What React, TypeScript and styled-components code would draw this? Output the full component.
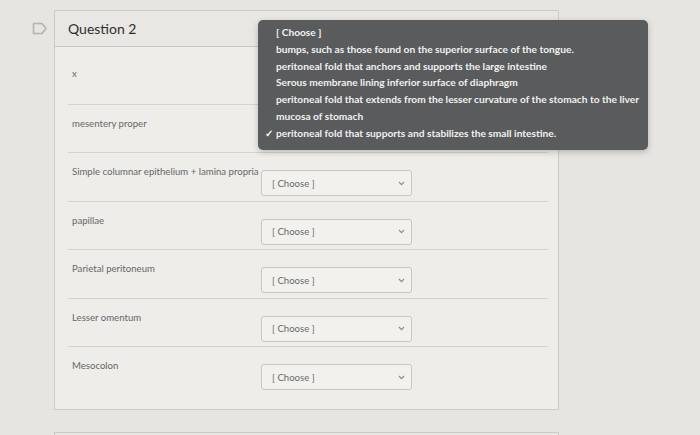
import styled, { createGlobalStyle } from "styled-components";

const GlobalStyle = createGlobalStyle`
  html, body {
    margin: 0;
    padding: 0;
    background: #e7e5e1;
  }
  body {
    font-family: "Lato", "Liberation Sans", sans-serif;
    width: 700px;
    height: 435px;
    overflow: hidden;
  }
`;

const rows = [
  "x",
  "mesentery proper",
  "Simple columnar epithelium + lamina propria",
  "papillae",
  "Parietal peritoneum",
  "Lesser omentum",
  "Mesocolon",
];

const options = [
  "[ Choose ]",
  "bumps, such as those found on the superior surface of the tongue.",
  "peritoneal fold that anchors and supports the large intestine",
  "Serous membrane lining inferior surface of diaphragm",
  "peritoneal fold that extends from the lesser curvature of the stomach to the liver",
  "mucosa of stomach",
  "peritoneal fold that supports and stabilizes the small intestine.",
];

const Page = styled.div`
  position: relative;
  display: flex;
  height: 435px;
  padding: 10px 0 0 32px;
  box-sizing: border-box;
  overflow: hidden;
`;

const FlagColumn = styled.div`
  width: 22px;
  padding-top: 9px;
`;

const Cards = styled.div`
  display: flex;
  flex-direction: column;
  gap: 22px;
  width: 505px;
`;

const Card = styled.div`
  background: #eeede9;
  border: 1px solid #cdcbc7;
  flex-shrink: 0;
`;

const Header = styled.div`
  display: flex;
  align-items: center;
  height: 35px;
  padding-left: 13px;
  background: #e9e7e3;
  border-bottom: 1px solid #c9c7c3;
  color: #2e2e2e;
  font-size: 14px;
`;

const Body = styled.div`
  padding: 8px 10px 14px 13px;
`;

const Row = styled.div<{ $first?: boolean }>`
  display: flex;
  align-items: flex-start;
  height: 48.5px;
  box-sizing: border-box;
  padding-left: 4px;
  border-top: ${(p) => (p.$first ? "none" : "1px solid #d5d3cf")};
`;

const Label = styled.div`
  width: 189px;
  margin-top: 12px;
  line-height: 14px;
  font-size: 9.6px;
  color: #676767;
  white-space: nowrap;
`;

const Select = styled.div<{ $covered?: boolean }>`
  display: flex;
  align-items: center;
  justify-content: space-between;
  width: 151px;
  height: 26px;
  margin-top: 17px;
  padding: 0 6px 0 10px;
  box-sizing: border-box;
  background: #f2f1ee;
  border: 1px solid #c9c7c3;
  border-radius: 3px;
  font-size: 9.6px;
  color: #6a6a6a;
  visibility: ${(p) => (p.$covered ? "hidden" : "visible")};
`;

const Menu = styled.div`
  position: absolute;
  left: 258px;
  top: 20px;
  width: 390px;
  padding: 4px 0 8px;
  background: #5a5b5d;
  border-radius: 5px;
  box-shadow: 0 2px 6px rgba(0, 0, 0, 0.22);
  color: #f1f1f1;
  font-size: 10.2px;
  font-weight: 700;
`;

const Option = styled.div<{ $checked?: boolean }>`
  position: relative;
  height: 16.8px;
  line-height: 16.8px;
  padding-left: 18px;
  white-space: nowrap;

  &::before {
    content: ${(p) => (p.$checked ? '"✓"' : '""')};
    position: absolute;
    left: 7px;
  }
`;

const Flag = () => (
  <svg width="16" height="13" viewBox="0 0 16 13">
    <path
      d="M1.5 1.5 H10 L14 6.5 L10 11.5 H1.5 Z"
      fill="none"
      stroke="#b3b3b1"
      strokeWidth="1.6"
      strokeLinejoin="round"
    />
  </svg>
);

const Chevron = () => (
  <svg width="7" height="5" viewBox="0 0 7 5">
    <path d="M1 1 L3.5 3.6 L6 1" fill="none" stroke="#8a8a8a" strokeWidth="1.1" />
  </svg>
);

export default function App() {
  return (
    <>
      <GlobalStyle />
      <Page>
        <FlagColumn>
          <Flag />
        </FlagColumn>
        <Cards>
          <Card>
            <Header>Question 2</Header>
            <Body>
              {rows.map((r, i) => (
                <Row key={r} $first={i === 0}>
                  <Label>{r}</Label>
                  {/* the first two selects sit under the open menu */}
                  <Select $covered={i < 2}>
                    [ Choose ]
                    <Chevron />
                  </Select>
                </Row>
              ))}
            </Body>
          </Card>
          <Card>
            <Header />
          </Card>
        </Cards>
        <Menu>
          {options.map((o, i) => (
            <Option key={o} $checked={i === options.length - 1}>
              {o}
            </Option>
          ))}
        </Menu>
      </Page>
    </>
  );
}
